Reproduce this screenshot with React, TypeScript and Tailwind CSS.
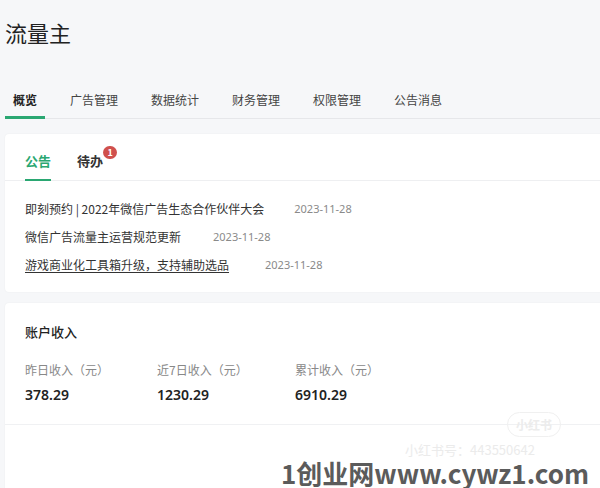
import React from 'react';

const tabs = ['概览', '广告管理', '数据统计', '财务管理', '权限管理', '公告消息'];

const notices = [
  { title: '即刻预约 | 2022年微信广告生态合作伙伴大会', date: '2023-11-28', gap: 'ml-[30px]', link: false },
  { title: '微信广告流量主运营规范更新', date: '2023-11-28', gap: 'ml-[32px]', link: false },
  { title: '游戏商业化工具箱升级，支持辅助选品', date: '2023-11-28', gap: 'ml-[36px]', link: true },
];

const incomes = [
  { label: '昨日收入（元）', value: '378.29', w: 'w-[132px]' },
  { label: '近7日收入（元）', value: '1230.29', w: 'w-[138px]' },
  { label: '累计收入（元）', value: '6910.29', w: 'w-[138px]' },
];

export default function App() {
  return (
    <div
      className="relative w-[600px] h-[488px] overflow-hidden bg-[#f6f7f9] text-[#333]"
      style={{ fontFamily: '"Noto Sans CJK SC", "Noto Sans", sans-serif' }}
    >
      <div className="pl-[5px]">
        <h1 className="pt-[16px] text-[22px] leading-[32px] font-normal text-[#222]">流量主</h1>

        {/* top tabs */}
        <div className="mt-[42px] border-b border-[#e6e7ea] flex gap-[17px] w-[620px]">
          {tabs.map((t, i) => (
            <div
              key={t}
              className={
                i === 0
                  ? 'px-[8px] pb-[5px] text-[12px] leading-[20px] font-bold text-[#222] border-b-[3px] border-[#2aa772] -mb-[1px]'
                  : 'px-[8px] pb-[8px] text-[12px] leading-[20px] text-[#444]'
              }
            >
              {t}
            </div>
          ))}
        </div>

        {/* notice card */}
        <div className="mt-[15px] w-[620px] bg-white rounded-[4px] shadow-[0_0_2px_rgba(0,0,0,0.06)]">
          <div className="flex gap-[26px] px-[20px] pt-[17px] border-b border-[#eeeff1]">
            <div className="pb-[7px] border-b-2 border-[#2aa772] -mb-[1px] text-[13px] leading-[20px] font-bold text-[#2aa772]">
              公告
            </div>
            <div className="relative pb-[9px] text-[13px] leading-[20px] font-bold text-[#333]">
              待办
              <span className="absolute -top-[5px] -right-[14px] w-[14px] h-[13px] rounded-full bg-[#d0504d] text-white text-[9px] leading-[13px] text-center font-bold">
                1
              </span>
            </div>
          </div>
          <div className="px-[20px] pt-[19px] pb-[18px] flex flex-col gap-[10px]">
            {notices.map((n) => (
              <div key={n.title} className="flex items-center text-[12px] leading-[18px]">
                <span className={n.link ? 'text-[#333] underline underline-offset-2' : 'text-[#333]'}>{n.title}</span>
                <span className={`${n.gap} text-[11px] text-[#8a8a8a]`} style={{ fontFamily: '"Noto Sans", sans-serif' }}>
                  {n.date}
                </span>
              </div>
            ))}
          </div>
        </div>

        {/* income card */}
        <div className="mt-[11px] w-[620px] h-[200px] bg-white rounded-[4px] shadow-[0_0_2px_rgba(0,0,0,0.06)]">
          <div className="px-[20px] pt-[19px] pb-[19px] border-b border-[#f0f1f3]">
            <div className="text-[13px] leading-[20px] font-medium text-[#222]">账户收入</div>
            <div className="mt-[19px] flex">
              {incomes.map((c) => (
                <div key={c.label} className={c.w}>
                  <div className="text-[12px] leading-[18px] text-[#888]">{c.label}</div>
                  <div
                    className="mt-[6px] text-[14px] leading-[20px] font-semibold text-[#222]"
                    style={{ fontFamily: '"Noto Sans", sans-serif' }}
                  >
                    {c.value}
                  </div>
                </div>
              ))}
            </div>
          </div>
        </div>
      </div>

      {/* watermarks */}
      <div className="absolute left-[507px] top-[412px] px-[8px] h-[25px] rounded-full border border-[#f0f0f0] text-[12px] leading-[23px] text-[#ececec] font-bold">
        小红书
      </div>
      <div className="absolute left-[405px] top-[442px] text-[13px] leading-[16px] text-[#ebebeb]">
        小红书号：443550642
      </div>
      <div
        className="absolute left-[281px] top-[458px] text-[26px] leading-[30px] font-bold text-[#5b5b5b] whitespace-nowrap"
        style={{ fontFamily: '"Noto Sans CJK SC", "DejaVu Sans", sans-serif' }}
      >
        1创业网www.cywz1.com
      </div>
    </div>
  );
}
